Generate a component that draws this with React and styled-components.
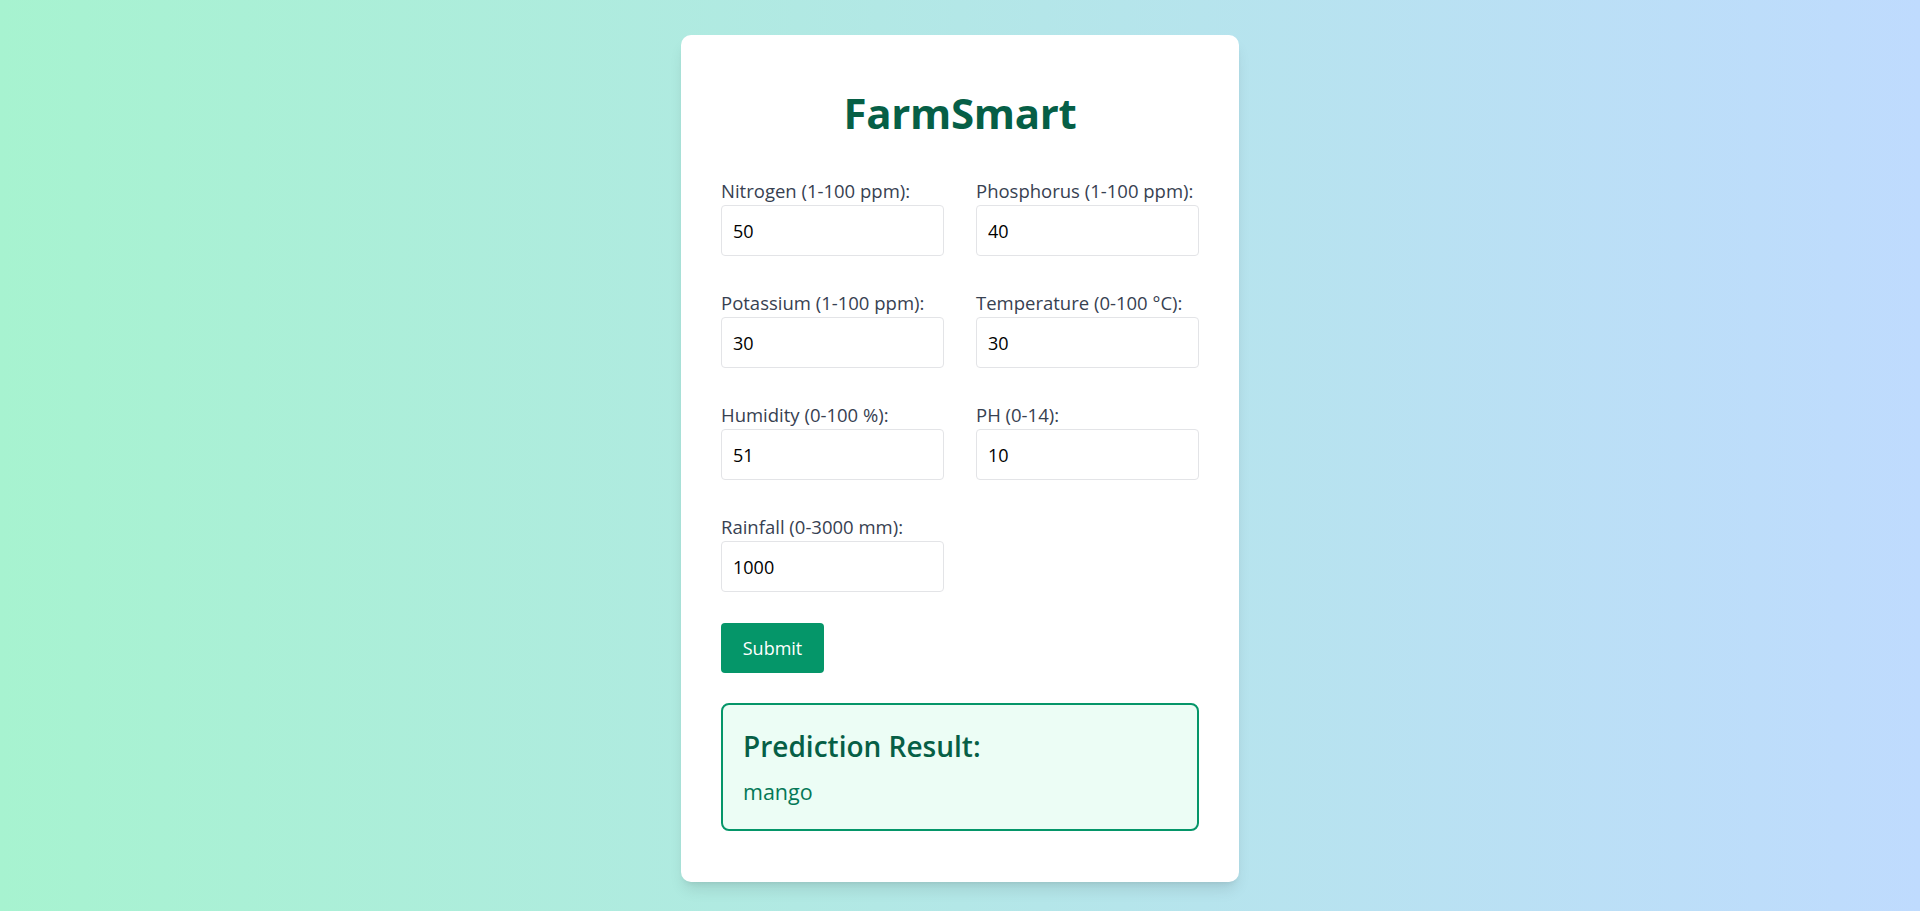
import React from "react";
import styled, { createGlobalStyle } from "styled-components";

const GlobalStyle = createGlobalStyle`
  html, body { margin: 0; padding: 0; }
  body {
    font-family: "Open Sans", "Noto Sans", sans-serif;
    background: linear-gradient(to right, #a7f3d0, #bfdbfe);
    min-height: 100vh;
  }
  * { box-sizing: border-box; }
`;

const Page = styled.div`
  min-height: 911px;
  display: flex;
  justify-content: center;
  align-items: flex-start;
  padding: 35px 0 29px;
`;

const Card = styled.div`
  width: 558px;
  background: #ffffff;
  border-radius: 10px;
  padding: 48px 40px 51px;
  box-shadow: 0 10px 15px -3px rgba(0, 0, 0, 0.1), 0 4px 6px -4px rgba(0, 0, 0, 0.1);
`;

const Title = styled.h1`
  margin: 0 0 34px;
  font-size: 42px;
  line-height: 60px;
  font-weight: 700;
  text-align: center;
  color: #065f46;
  letter-spacing: -0.3px;
`;

const Grid = styled.div`
  display: grid;
  grid-template-columns: 1fr 1fr;
  column-gap: 32px;
  row-gap: 33px;
`;

const Field = styled.div`
  display: flex;
  flex-direction: column;
`;

const Label = styled.label`
  font-size: 18.5px;
  line-height: 28px;
  color: #374151;
  white-space: nowrap;
`;

const Input = styled.input`
  height: 51px;
  width: 100%;
  padding: 0 11px;
  font-family: inherit;
  font-size: 18px;
  color: #000;
  border: 1px solid #e3e4e7;
  border-radius: 4px;
  background: #fff;
  outline: none;
`;

const Button = styled.button`
  margin-top: 31px;
  height: 50px;
  width: 103px;
  border: none;
  border-radius: 4px;
  background: #059669;
  color: #fff;
  font-family: inherit;
  font-size: 18px;
  cursor: pointer;
`;

const Result = styled.div`
  margin-top: 30px;
  border: 2px solid #059669;
  border-radius: 8px;
  background: #ecfdf5;
  padding: 20px 20px 21px;
`;

const ResultTitle = styled.h2`
  margin: 0;
  font-size: 28px;
  line-height: 42px;
  font-weight: 600;
  color: #065f46;
`;

const ResultValue = styled.p`
  margin: 8px 0 0;
  font-size: 21.5px;
  line-height: 33px;
  color: #047857;
`;

const fields = [
  ["Nitrogen (1-100 ppm):", "50"],
  ["Phosphorus (1-100 ppm):", "40"],
  ["Potassium (1-100 ppm):", "30"],
  ["Temperature (0-100 °C):", "30"],
  ["Humidity (0-100 %):", "51"],
  ["PH (0-14):", "10"],
  ["Rainfall (0-3000 mm):", "1000"],
];

export default function App() {
  return (
    <>
      <GlobalStyle />
      <Page>
        <Card>
          <Title>FarmSmart</Title>
          <form onSubmit={(e) => e.preventDefault()}>
            <Grid>
              {fields.map(([label, value], i) => (
                <Field key={i}>
                  <Label htmlFor={`f${i}`}>{label}</Label>
                  <Input id={`f${i}`} type="text" defaultValue={value} />
                </Field>
              ))}
            </Grid>
            <Button type="submit">Submit</Button>
          </form>
          <Result>
            <ResultTitle>Prediction Result:</ResultTitle>
            <ResultValue>mango</ResultValue>
          </Result>
        </Card>
      </Page>
    </>
  );
}
